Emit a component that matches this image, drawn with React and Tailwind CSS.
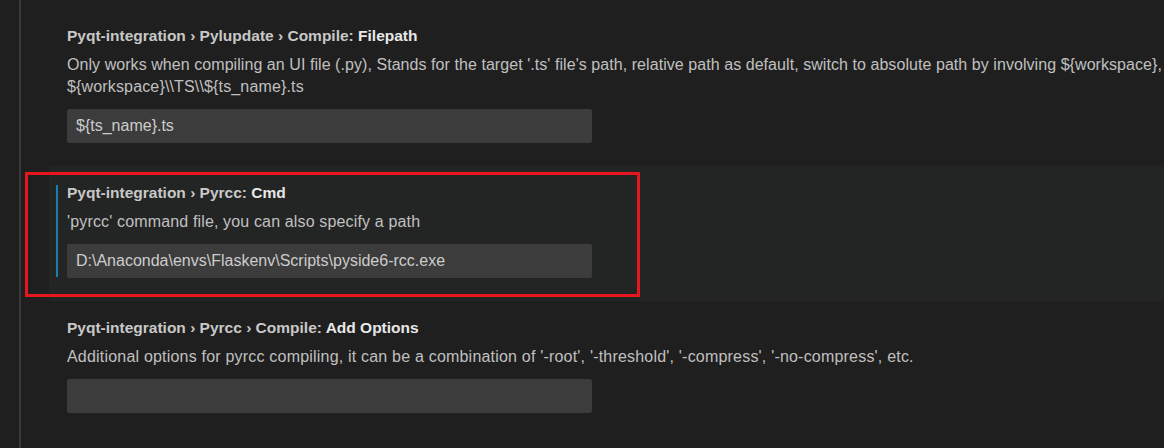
export default function App() {
  const font = { fontFamily: '"Liberation Sans", Arial, sans-serif' };
  return (
    <div className="relative w-[1164px] h-[448px] overflow-hidden bg-[#1f1f1f] text-[16px]" style={font}>
      <div className="absolute left-[19px] top-0 h-full w-[2px] bg-[#3a3a3a]" />
      <div className="pt-[9px] pl-[49px]">
        {/* Row 1 */}
        <div className="relative pt-[16px] pb-[23px] pl-[18px]">
          <div className="leading-[22px] h-[22px] whitespace-nowrap font-semibold text-[15.5px] text-[#c8c8c8]">
            Pyqt-integration › Pylupdate › Compile: <span className="text-[#e8e8e8]">Filepath</span>
          </div>
          <div className="mt-[7px] leading-[22px] text-[#c0c0c0] whitespace-nowrap">
            <div className="tracking-[0.06px]">Only works when compiling an UI file (.py), Stands for the target '.ts' file's path, relative path as default, switch to absolute path by involving ${'{'}workspace{'}'},</div>
            <div className="tracking-[0.15px]">${'{'}workspace{'}'}\\TS\\${'{'}ts_name{'}'}.ts</div>
          </div>
          <div className="mt-[11px] w-[525px] h-[34px] rounded-[2px] bg-[#3c3c3c] pl-[9px] flex items-center text-[#cccccc] whitespace-nowrap">
            ${'{'}ts_name{'}'}.ts
          </div>
        </div>
        {/* Row 2 focused */}
        <div className="relative pt-[16px] pb-[23px] pl-[18px] bg-[#232424]">
          <div className="absolute left-[7px] top-[19px] w-[2px] h-[92px] bg-[#1a7fad]" />
          <div className="leading-[22px] h-[22px] whitespace-nowrap font-semibold text-[15.5px] text-[#c8c8c8]">
            Pyqt-integration › Pyrcc: <span className="text-[#e8e8e8]">Cmd</span>
          </div>
          <div className="mt-[7px] leading-[22px] text-[#c0c0c0] whitespace-nowrap tracking-[0.15px]">
            'pyrcc' command file, you can also specify a path
          </div>
          <div className="mt-[11px] w-[525px] h-[34px] rounded-[2px] bg-[#3c3c3c] pl-[9px] flex items-center text-[#cccccc] whitespace-nowrap">
            D:\Anaconda\envs\Flaskenv\Scripts\pyside6-rcc.exe
          </div>
        </div>
        {/* Row 3 */}
        <div className="relative pt-[16px] pb-[23px] pl-[18px]">
          <div className="leading-[22px] h-[22px] whitespace-nowrap font-semibold text-[15.5px] text-[#c8c8c8]">
            Pyqt-integration › Pyrcc › Compile: <span className="text-[#e8e8e8]">Add Options</span>
          </div>
          <div className="mt-[7px] leading-[22px] text-[#c0c0c0] whitespace-nowrap tracking-[0.2px]">
            Additional options for pyrcc compiling, it can be a combination of '-root', '-threshold', '-compress', '-no-compress', etc.
          </div>
          <div className="mt-[11px] w-[525px] h-[34px] rounded-[2px] bg-[#3c3c3c]" />
        </div>
      </div>
      <div className="absolute left-[25px] top-[172px] w-[615px] h-[125px] border-[3px] border-[#e8171f] pointer-events-none" />
    </div>
  );
}
